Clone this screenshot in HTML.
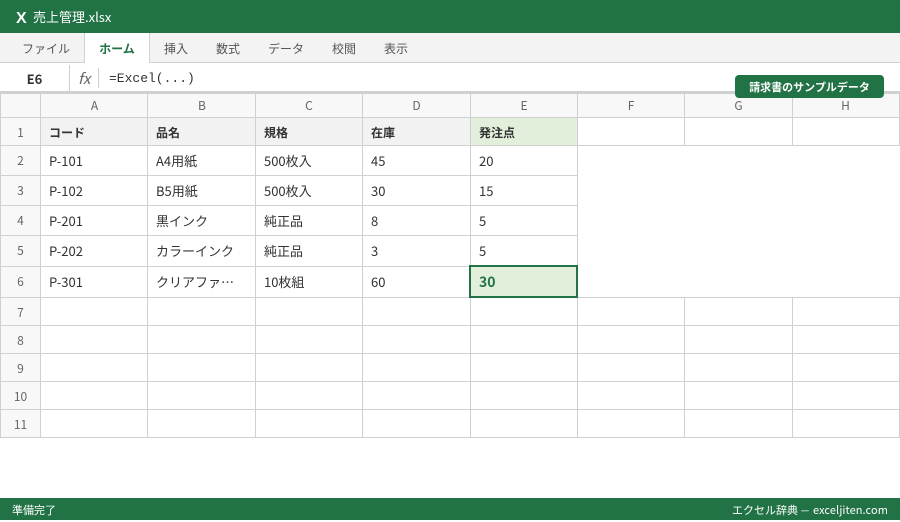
<!DOCTYPE html>
<html lang="ja"><head><meta charset="utf-8"><style>
*{box-sizing:border-box}
html,body{margin:0;padding:0;width:900px;height:520px;overflow:hidden;background:#fff;font-family:"Noto Sans CJK JP","Liberation Sans",sans-serif;color:#333}
.abs{position:absolute;white-space:nowrap}
#title{left:0;top:0;width:900px;height:33px;background:#217346}
#ribbon{left:0;top:33px;width:900px;height:30px;background:#f3f3f3;border-bottom:1px solid #d0d0d0}
.tab{position:absolute;top:41px;font-size:12px;line-height:16px;color:#555;white-space:nowrap}
#home{left:84px;top:33px;width:66px;height:30px;background:#fff;border:1px solid #d0d0d0;border-bottom:none;border-top:none;font-size:12px;font-weight:700;color:#217346;text-align:center;line-height:32px}
#fbar{left:0;top:63px;width:900px;height:30px;background:#fff;border-bottom:2px solid #d0d0d0}
table{position:absolute;left:0;top:93px;border-collapse:collapse;table-layout:fixed;width:900px}
td,th{border:1px solid #d0d0d0;padding:0 8px;font-size:13px;font-weight:400;overflow:hidden;white-space:nowrap;color:#333;text-align:left}
.h{background:#f8f8f8;color:#666;text-align:center;font-size:12px;padding:0}
.b{background:#f2f2f2;font-weight:700;font-size:12px}
.g{background:#e2efda;font-weight:700;font-size:12px}
.up td{padding-bottom:2px}
.up td.h{padding:0 0 2px}
.dn td{padding-top:2px}
.dn td.h{padding:2px 0 0}
.up td.sel{background:#e2efda;color:#217346;font-weight:700;font-size:14px;padding-bottom:0}
#sel{left:469px;top:265px;width:109px;height:33px;border:2px solid #217346;z-index:2}
#badge{left:735px;top:75px;width:149px;height:23px;background:#217346;border-radius:4px;color:#fff;font-size:11px;font-weight:700;text-align:center;line-height:24px;z-index:3}
#status{left:0;top:498px;width:900px;height:22px;background:#217346;color:#fff;font-size:11px;line-height:24px}
</style></head><body>
<div class="abs" id="title"></div>
<div class="abs" style="left:16px;top:9px;font-family:'Liberation Sans',sans-serif;font-size:16px;line-height:20px;font-weight:700;color:#fff">X</div>
<div class="abs" style="left:33px;top:8px;font-size:13px;line-height:18px;color:#fff">売上管理.xlsx</div>
<div class="abs" id="ribbon"></div>
<div class="tab" style="left:22px">ファイル</div>
<div class="abs" id="home">ホーム</div>
<div class="tab" style="left:164px">挿入</div>
<div class="tab" style="left:216px">数式</div>
<div class="tab" style="left:268px">データ</div>
<div class="tab" style="left:332px">校閲</div>
<div class="tab" style="left:384px">表示</div>
<div class="abs" id="fbar"></div>
<div class="abs" style="left:0;top:65px;width:70px;height:26px;border-right:1px solid #d0d0d0;text-align:center;font-size:13px;font-weight:700;line-height:27px;color:#333">E6</div>
<div class="abs" style="left:78px;top:69px;font-style:italic;font-size:15px;line-height:20px;color:#666">fx</div>
<div class="abs" style="left:98px;top:68px;width:1px;height:20px;background:#d0d0d0"></div>
<div class="abs" style="left:109px;top:70px;font-family:'Liberation Mono',monospace;font-size:13px;line-height:17px;color:#333">=Excel(...)</div>
<div class="abs" id="badge">請求書のサンプルデータ</div>
<table style="width:900px">
<colgroup><col style="width:40px"><col style="width:107px"><col style="width:108px"><col style="width:107px"><col style="width:108px"><col style="width:107px"><col style="width:107px"><col style="width:108px"><col style="width:107px"></colgroup>
<tr style="height:24px"><td class="h"></td><td class="h" style="padding-left:1px">A</td><td class="h" style="padding-left:1px">B</td><td class="h">C</td><td class="h">D</td><td class="h">E</td><td class="h">F</td><td class="h">G</td><td class="h" style="padding-right:1px">H</td></tr>
<tr class="dn" style="height:28px"><td class="h">1</td><td class="b">コード</td><td class="b">品名</td><td class="b">規格</td><td class="b">在庫</td><td class="g">発注点</td><td></td><td></td><td></td></tr>
<tr style="height:30px"><td class="h">2</td><td>P-101</td><td>A4用紙</td><td>500枚入</td><td>45</td><td>20</td></tr>
<tr style="height:30px"><td class="h">3</td><td>P-102</td><td>B5用紙</td><td>500枚入</td><td>30</td><td>15</td></tr>
<tr style="height:30px"><td class="h">4</td><td>P-201</td><td>黒インク</td><td>純正品</td><td>8</td><td>5</td></tr>
<tr class="up" style="height:31px"><td class="h">5</td><td>P-202</td><td>カラーインク</td><td>純正品</td><td>3</td><td>5</td></tr>
<tr class="up" style="height:31px"><td class="h">6</td><td>P-301</td><td>クリアファ…</td><td>10枚組</td><td>60</td><td class="sel">30</td></tr>
<tr class="dn" style="height:28px"><td class="h">7</td><td></td><td></td><td></td><td></td><td></td><td></td><td></td><td></td></tr>
<tr class="dn" style="height:28px"><td class="h">8</td><td></td><td></td><td></td><td></td><td></td><td></td><td></td><td></td></tr>
<tr class="dn" style="height:28px"><td class="h">9</td><td></td><td></td><td></td><td></td><td></td><td></td><td></td><td></td></tr>
<tr class="dn" style="height:28px"><td class="h">10</td><td></td><td></td><td></td><td></td><td></td><td></td><td></td><td></td></tr>
<tr class="dn" style="height:28px"><td class="h">11</td><td></td><td></td><td></td><td></td><td></td><td></td><td></td><td></td></tr>
</table>
<div class="abs" id="sel"></div>
<div class="abs" id="status"><span class="abs" style="left:12px;top:0">準備完了</span><span class="abs" style="left:732px;top:0">エクセル辞典</span><span class="abs" style="left:800px;top:0;transform:scaleX(.85);transform-origin:50% 50%">—</span><span class="abs" style="right:12px;top:0;letter-spacing:.08px">exceljiten.com</span></div>
</body></html>
